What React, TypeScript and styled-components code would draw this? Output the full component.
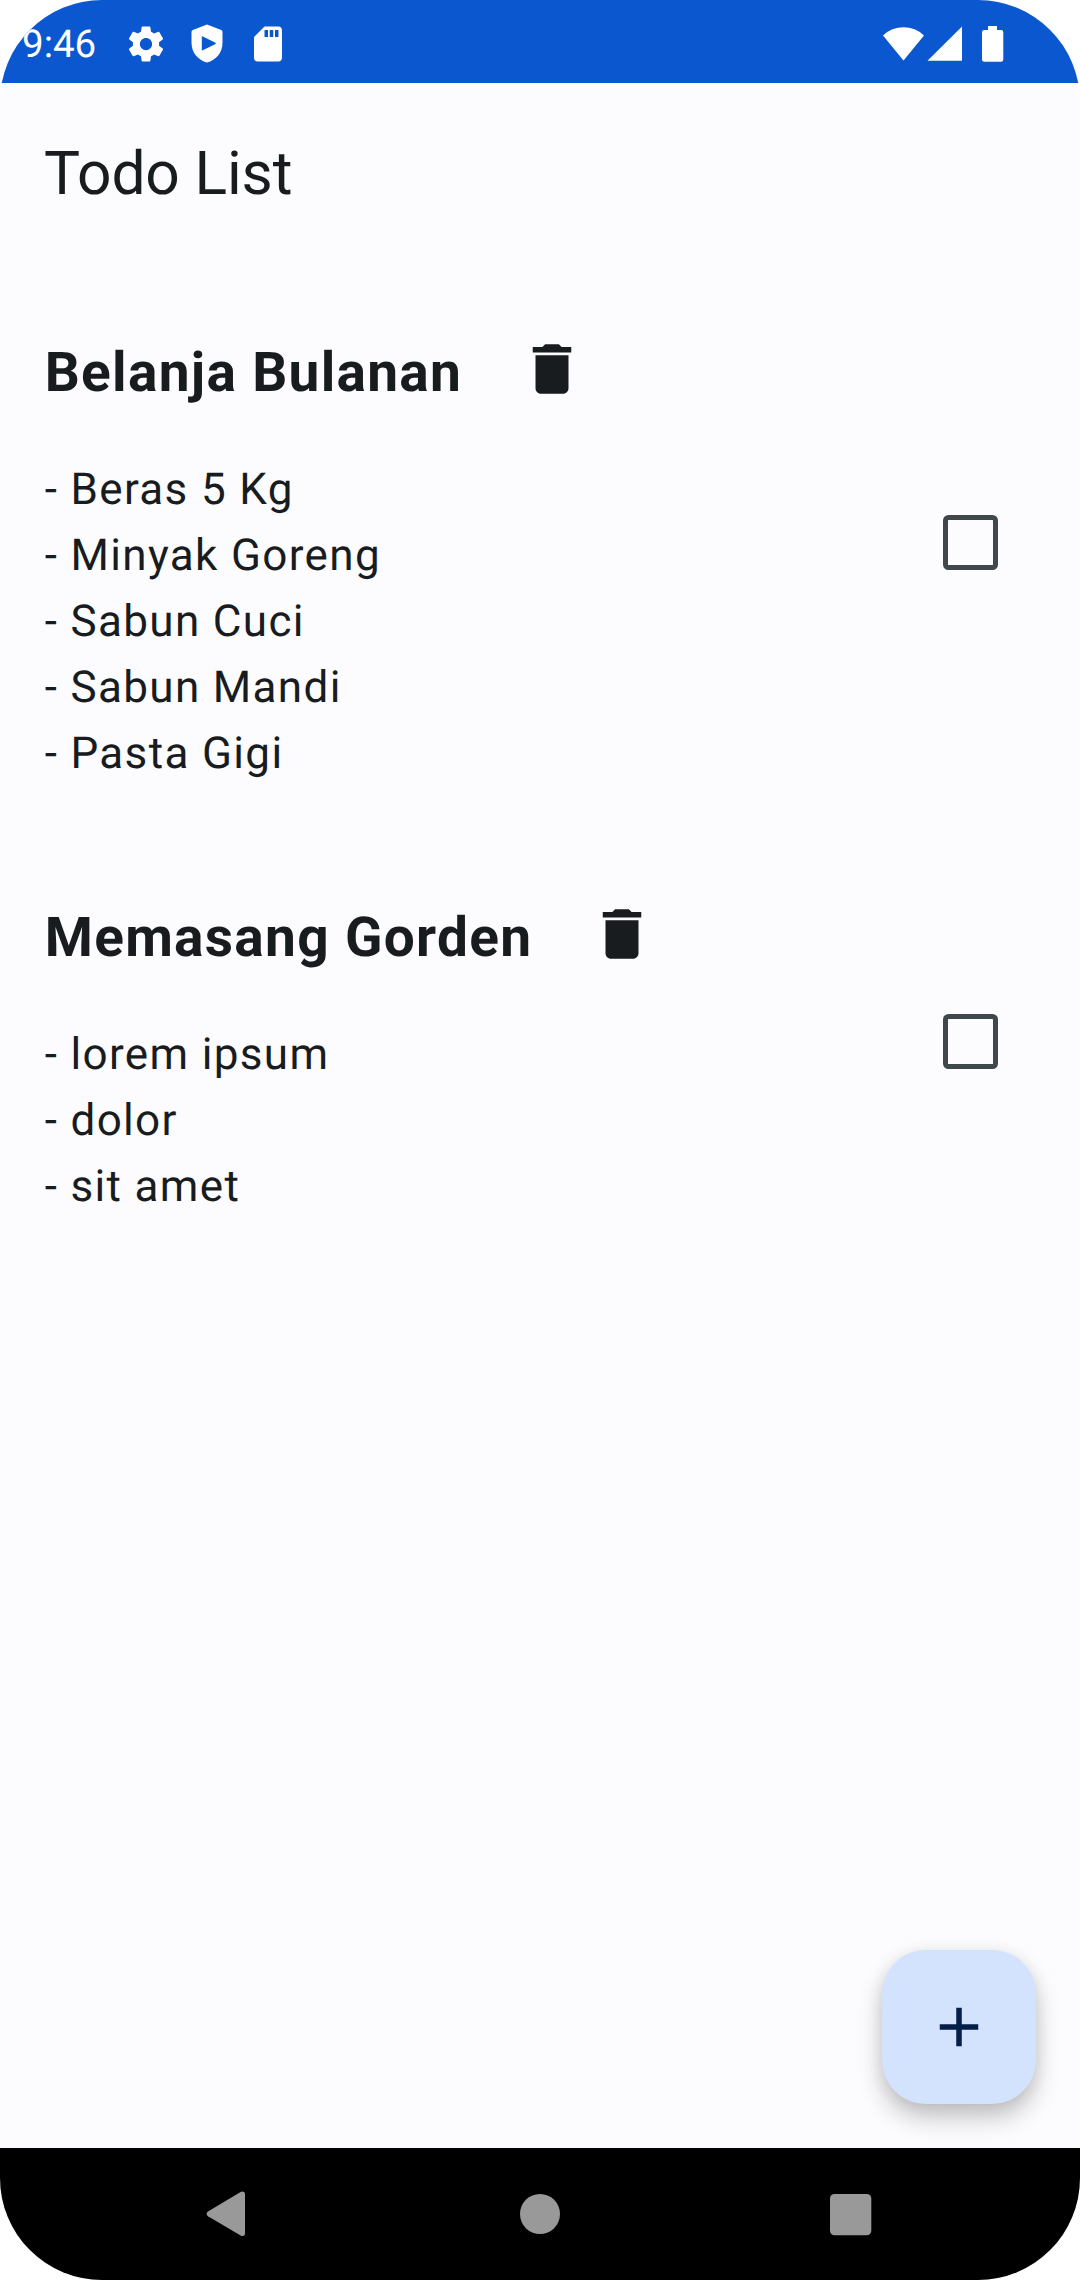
import React, { useState } from "react";
import styled, { createGlobalStyle } from "styled-components";

const GlobalStyle = createGlobalStyle`
  body {
    margin: 0;
    background: #ffffff;
    font-family: Roboto, "Noto Sans", sans-serif;
    text-rendering: geometricPrecision;
  }
`;

const Screen = styled.div`
  position: relative;
  display: flex;
  flex-direction: column;
  width: 1080px;
  height: 2280px;
  overflow: hidden;
  border-radius: 102px;
  background: #fcfcff;
  color: #191c1e;
`;

const StatusBar = styled.header`
  display: flex;
  flex: none;
  align-items: center;
  justify-content: space-between;
  box-sizing: border-box;
  height: 83px;
  padding: 4px 72px 0 22px;
  background: #0b57d0;
  color: #ffffff;
`;

const StatusGroup = styled.div<{ $gap: number }>`
  display: flex;
  align-items: center;
  gap: ${(p) => p.$gap}px;
`;

const Clock = styled.span`
  width: 84px;
  padding-top: 2px;
  font-size: 38.5px;
  line-height: 46px;
  white-space: nowrap;
`;

const Glyph = styled.svg`
  display: block;
  flex: none;
  fill: currentColor;
`;

const AppBar = styled.div`
  flex: none;
  box-sizing: border-box;
  height: 177px;
  padding: 53px 44px 0;
`;

const Title = styled.h1`
  margin: 0;
  font-size: 60.5px;
  font-weight: 400;
  line-height: 76px;
  letter-spacing: -0.15px;
`;

const TodoList = styled.main`
  flex: 1;
`;

const TodoItem = styled.section`
  display: flex;
  align-items: center;
  justify-content: space-between;
  padding: 0 44px 0 44.7px;
`;

const TodoBody = styled.div`
  padding: 43px 0 39px;
`;

const TodoHeader = styled.div`
  display: flex;
  align-items: center;
  gap: 23.5px;
  height: 132px;
  margin-bottom: 21px;
`;

const TodoTitle = styled.h2`
  margin: 0;
  padding-top: 8px;
  font-size: 55px;
  font-weight: 700;
  line-height: 66px;
  letter-spacing: 1.3px;
`;

const TouchTarget = styled.button`
  display: flex;
  flex: none;
  align-items: center;
  justify-content: center;
  width: 132px;
  height: 132px;
  padding: 0;
  border: 0;
  background: none;
  color: inherit;
`;

const TodoText = styled.p`
  margin: 0;
  font-size: 44px;
  line-height: 66px;
  letter-spacing: 1.35px;
  white-space: pre-line;
`;

const Box = styled.span<{ $checked: boolean }>`
  box-sizing: border-box;
  width: 55px;
  height: 55px;
  border: 5px solid ${(p) => (p.$checked ? "#0b57d0" : "#40484c")};
  border-radius: 5.5px;
  background: ${(p) => (p.$checked ? "#0b57d0" : "transparent")};
`;

const Fab = styled.button`
  position: absolute;
  right: 44px;
  bottom: 176px;
  display: flex;
  align-items: center;
  justify-content: center;
  width: 154px;
  height: 154px;
  padding: 0;
  border: 0;
  border-radius: 44px;
  background: #d3e3fd;
  color: #041e49;
  box-shadow: 0 14px 24px rgba(0, 0, 0, 0.22), 0 2px 16px rgba(0, 0, 0, 0.08);
`;

const NavBar = styled.nav`
  position: relative;
  display: flex;
  flex: none;
  align-items: center;
  justify-content: space-between;
  box-sizing: border-box;
  height: 132px;
  padding: 0 207px 0 205px;
  background: #000000;
  color: #999999;
`;

const HomeGlyph = styled(Glyph)`
  margin-left: 3px;
`;

const todos = [
  {
    title: "Belanja Bulanan",
    text: "- Beras 5 Kg\n- Minyak Goreng\n- Sabun Cuci\n- Sabun Mandi\n- Pasta Gigi",
  },
  { title: "Memasang Gorden", text: "- lorem ipsum\n- dolor\n- sit amet" },
];

const Todo = ({ title, text }: { title: string; text: string }) => {
  const [checked, setChecked] = useState(false);
  return (
    <TodoItem>
      <TodoBody>
        <TodoHeader>
          <TodoTitle>{title}</TodoTitle>
          <TouchTarget aria-label="Delete">
            <Glyph width={66} height={66} viewBox="0 0 24 24">
              <path d="M6 19c0 1.1.9 2 2 2h8c1.1 0 2-.9 2-2V7H6v12zM19 4h-3.5l-1-1h-5l-1 1H5v2h14V4z" />
            </Glyph>
          </TouchTarget>
        </TodoHeader>
        <TodoText>{text}</TodoText>
      </TodoBody>
      <TouchTarget
        role="checkbox"
        aria-checked={checked}
        aria-label={title}
        onClick={() => setChecked(!checked)}
      >
        <Box $checked={checked} />
      </TouchTarget>
    </TodoItem>
  );
};

export default function App() {
  return (
    <>
      <GlobalStyle />
      <Screen>
        <StatusBar>
          <StatusGroup $gap={19}>
            <Clock>9:46</Clock>
            <Glyph width={42} height={42} viewBox="0 0 24 24">
              <path d="M19.43 12.98c.04-.32.07-.64.07-.98s-.03-.66-.07-.98l2.11-1.65c.19-.15.24-.42.12-.64l-2-3.46c-.12-.22-.39-.3-.61-.22l-2.49 1c-.52-.4-1.08-.73-1.69-.98l-.38-2.65C14.46 2.18 14.25 2 14 2h-4c-.25 0-.46.18-.49.42l-.38 2.65c-.61.25-1.17.59-1.69.98l-2.49-1c-.23-.09-.49 0-.61.22l-2 3.46c-.13.22-.07.49.12.64l2.11 1.65c-.04.32-.07.65-.07.98s.03.66.07.98l-2.11 1.65c-.19.15-.24.42-.12.64l2 3.46c.12.22.39.3.61.22l2.49-1c.52.4 1.08.73 1.69.98l.38 2.65c.03.24.24.42.49.42h4c.25 0 .46-.18.49-.42l.38-2.65c.61-.25 1.17-.59 1.69-.98l2.49 1c.23.09.49 0 .61-.22l2-3.46c.12-.22.07-.49-.12-.64l-2.11-1.65zM12 15.5c-1.93 0-3.5-1.57-3.5-3.5s1.57-3.5 3.5-3.5 3.5 1.57 3.5 3.5-1.57 3.5-3.5 3.5z" />
            </Glyph>
            <Glyph width={42} height={42} viewBox="0 0 42 42">
              <path
                fillRule="evenodd"
                d="M21 1.6 35.2 7.1Q36.5 7.7 36.5 9V19.5C36.5 30 30 37 21 39.6C12 37 5.500 30 5.500 19.5V9Q5.500 7.700 6.800 7.100ZM16.800 13.500Q15.800 13 15.800 14.200V26.600Q15.800 27.800 16.800 27.300L29.500 21Q30.200 20.400 29.500 19.800Z"
              />
            </Glyph>
            <Glyph width={42} height={42} viewBox="0 0 24 24">
              <path d="M18 2h-8L4.020 8 4 20c0 1.100.9 2 2 2h12c1.100 0 2-.9 2-2V4c0-1.100-.9-2-2-2zm-6 6h-2V4h2v4zm3 0h-2V4h2v4zm3 0h-2V4h2v4z" />
            </Glyph>
          </StatusGroup>
          <Glyph width={126} height={42} viewBox="0 0 126 42">
            <path d="M1 12.500A29.500 29.500 0 0 1 42 12.500L21.500 37.500Z" />
            <path d="M45.500 37.800 80 3.500V37.800Z" />
            <path d="M106 3H115V7H119Q121.300 7 121.300 9.300V36.500Q121.300 38.800 119 38.800H102.300Q100 38.800 100 36.500V9.300Q100 7 102.300 7H106Z" />
          </Glyph>
        </StatusBar>
        <AppBar>
          <Title>Todo List</Title>
        </AppBar>
        <TodoList>
          {todos.map((todo) => (
            <Todo key={todo.title} {...todo} />
          ))}
        </TodoList>
        <Fab aria-label="Add">
          <Glyph width={66} height={66} viewBox="0 0 24 24">
            <path d="M19 13h-6v6h-2v-6H5v-2h6V5h2v6h6v2z" />
          </Glyph>
        </Fab>
        <NavBar>
          <Glyph width={42} height={46} viewBox="0 0 42 46">
            <path d="M3 20.500 36 0.800Q40 -0.500 40 3V42.500Q40 46 36 44.700L3 25.200Q0.200 22.900 3 20.500Z" />
          </Glyph>
          <HomeGlyph width={42} height={42} viewBox="0 0 42 42">
            <circle cx={21} cy={21} r={20} />
          </HomeGlyph>
          <Glyph width={43} height={43} viewBox="0 0 43 43">
            <rect x={0} y={1} width={41.300} height={41.300} rx={4.500} />
          </Glyph>
        </NavBar>
      </Screen>
    </>
  );
}
